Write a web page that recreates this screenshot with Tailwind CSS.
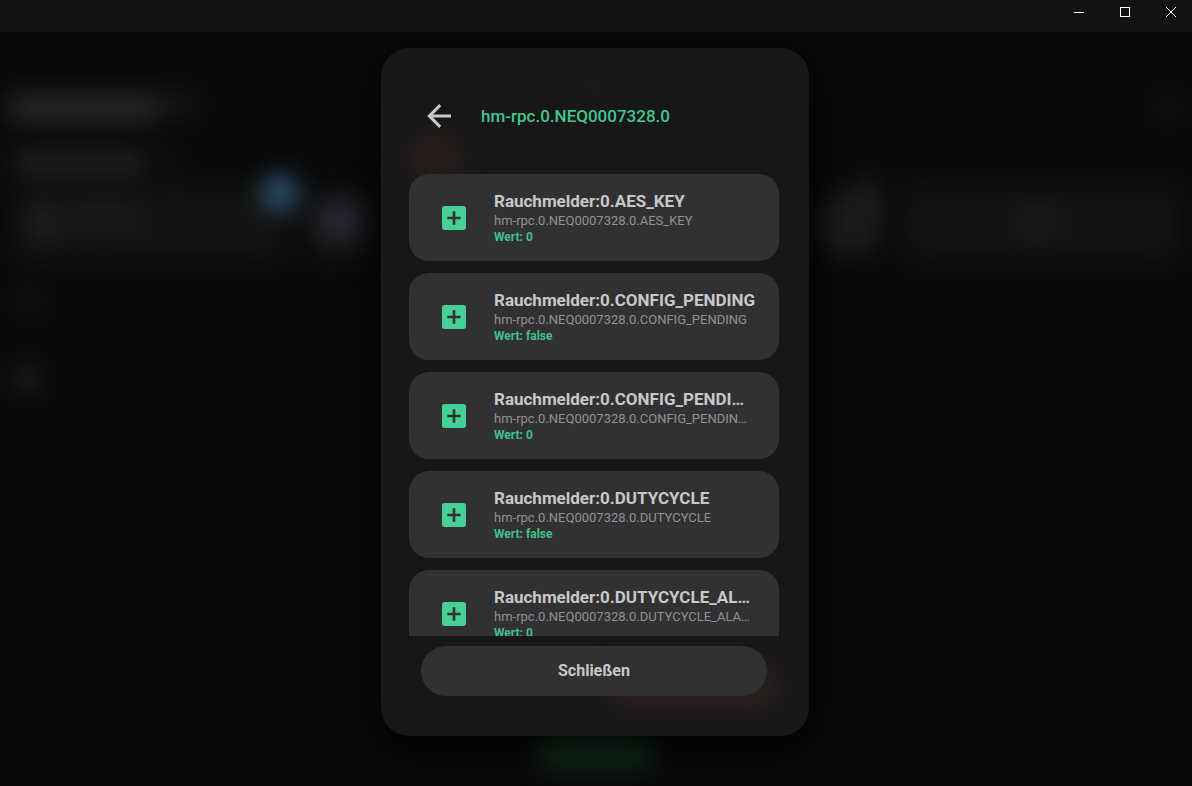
<!DOCTYPE html>
<html lang="de">
<head>
    <meta charset="UTF-8" />
    <meta name="viewport" content="width=device-width, initial-scale=1.0"/>
    <title>hm-rpc.0.NEQ0007328.0</title>
    <script src="https://cdn.jsdelivr.net/npm/@tailwindcss/browser@4"></script>
</head>
<body class="relative isolate flex h-screen flex-col overflow-hidden bg-[#090909] font-[Roboto,sans-serif] text-[#c8c8c8]">

<!-- Blurred dashboard behind the dialog -->
<svg class="absolute inset-0 -z-10 h-full w-full" aria-hidden="true">
    <defs>
        <filter id="blur" x="-100%" y="-100%" width="300%" height="300%" color-interpolation-filters="sRGB">
            <feGaussianBlur stdDeviation="12" />
        </filter>
    </defs>
    <g filter="url(#blur)">
        <rect x="8" y="94" width="150" height="28" rx="8" fill="#272727" />
        <rect x="158" y="92" width="38" height="24" rx="8" fill="#171717" />
        <rect x="14" y="150" width="130" height="24" rx="8" fill="#212121" />
        <rect x="144" y="150" width="34" height="20" rx="8" fill="#111111" />
        <rect x="14" y="184" width="274" height="78" rx="20" fill="#131313" />
        <circle cx="43" cy="222" r="15" fill="#222222" />
        <rect x="74" y="208" width="58" height="18" fill="#1e1e1f" />
        <circle cx="340" cy="224" r="38" fill="#161616" />
        <circle cx="29" cy="300" r="13" fill="#131313" />
        <circle cx="27" cy="379" r="14" fill="#202020" />
    </g>
    <g filter="url(#blur)">
        <circle cx="280" cy="193" r="19" fill="#2c516b" />
        <circle cx="340" cy="221" r="17" fill="#2f2f42" />
    </g>
    <svg x="100%" overflow="visible">
        <g filter="url(#blur)">
            <rect x="-290" y="184" width="280" height="78" rx="20" fill="#131313" />
            <circle cx="-342" cy="224" r="34" fill="#1b1b1d" />
            <circle cx="-324" cy="194" r="14" fill="#202020" />
            <circle cx="-153" cy="222" r="14" fill="#1e1e1e" />
            <circle cx="-24" cy="107" r="12" fill="#131313" />
        </g>
    </svg>
</svg>

<header class="-mr-0.5 flex h-8 shrink-0 justify-end bg-[#131313] text-white">
    <button type="button" aria-label="Minimieren" class="flex h-6 w-[46px] items-center justify-center">
        <svg class="h-[10px] w-[10px]" viewBox="0 0 10 10" shape-rendering="crispEdges"><path d="M0 5h10v1H0z" fill="currentColor" /></svg>
    </button>
    <button type="button" aria-label="Maximieren" class="flex h-6 w-[46px] items-center justify-center">
        <svg class="h-[10px] w-[10px]" viewBox="0 0 10 10" shape-rendering="crispEdges"><path d="M.5.5h9v9h-9z" fill="none" stroke="currentColor" /></svg>
    </button>
    <button type="button" aria-label="Schließen" class="flex h-6 w-[46px] items-center justify-center">
        <svg class="h-[10px] w-[10px]" viewBox="0 0 10 10"><path d="M0 0l10 10M10 0L0 10" fill="none" stroke="currentColor" /></svg>
    </button>
</header>

<main class="flex min-h-0 flex-1 justify-center pt-4 pr-0.5 pb-[50px]">
    <div role="dialog" aria-labelledby="dialog-title" class="relative isolate flex w-full max-w-[428px] flex-col overflow-hidden rounded-[28px] bg-[#171719] pr-[30px] pl-7 shadow-[0_10px_40px_#000]">
        <svg class="absolute inset-0 -z-10 h-full w-full" aria-hidden="true">
            <g filter="url(#blur)">
                <circle cx="54" cy="110" r="18" fill="none" stroke="#33231c" stroke-width="12" />
                <rect x="194" y="32" width="38" height="12" fill="#202022" />
            </g>
            <svg y="100%" overflow="visible">
                <rect x="228" y="-72" width="172" height="46" rx="20" fill="#2b1f1d" filter="url(#blur)" />
            </svg>
        </svg>

        <div class="mt-[50px] mb-10 flex items-center gap-6 pl-3">
            <button type="button" aria-label="Zurück">
                <svg class="h-9 w-9" viewBox="0 0 24 24" fill="currentColor"><path d="M20 11v2H8l5.5 5.5-1.42 1.42L4.16 12l7.92-7.92L13.5 5.5 8 11h12z" /></svg>
            </button>
            <h1 id="dialog-title" class="text-[17px] leading-6 font-medium text-[#40c88c]">hm-rpc.0.NEQ0007328.0</h1>
        </div>

        <ul class="flex min-h-0 flex-1 flex-col gap-3 overflow-y-auto [scrollbar-width:none]">
            <li class="flex shrink-0 items-center gap-6 rounded-[20px] bg-[#313133] py-4 pr-[23px] pl-[29px]">
                <button type="button" aria-label="Hinzufügen" class="shrink-0 text-[#45d095]">
                    <svg class="h-8 w-8" viewBox="0 0 24 24" fill="currentColor"><path d="M17 13h-4v4h-2v-4H7v-2h4V7h2v4h4m2-8H5a2 2 0 0 0-2 2v14a2 2 0 0 0 2 2h14a2 2 0 0 0 2-2V5a2 2 0 0 0-2-2z" /></svg>
                </button>
                <div class="min-w-0">
                    <h2 class="truncate text-[17px] leading-[22px] font-bold">Rauchmelder:0.AES_KEY</h2>
                    <p class="truncate pr-1 text-[13px] leading-[18px] text-[#929293]">hm-rpc.0.NEQ0007328.0.AES_KEY</p>
                    <p class="truncate text-xs leading-[15px] font-bold text-[#40c08a]">Wert: 0</p>
                </div>
            </li>
            <li class="flex shrink-0 items-center gap-6 rounded-[20px] bg-[#313133] py-4 pr-[23px] pl-[29px]">
                <button type="button" aria-label="Hinzufügen" class="shrink-0 text-[#45d095]">
                    <svg class="h-8 w-8" viewBox="0 0 24 24" fill="currentColor"><path d="M17 13h-4v4h-2v-4H7v-2h4V7h2v4h4m2-8H5a2 2 0 0 0-2 2v14a2 2 0 0 0 2 2h14a2 2 0 0 0 2-2V5a2 2 0 0 0-2-2z" /></svg>
                </button>
                <div class="min-w-0">
                    <h2 class="truncate text-[17px] leading-[22px] font-bold">Rauchmelder:0.CONFIG_PENDING</h2>
                    <p class="truncate pr-1 text-[13px] leading-[18px] text-[#929293]">hm-rpc.0.NEQ0007328.0.CONFIG_PENDING</p>
                    <p class="truncate text-xs leading-[15px] font-bold text-[#40c08a]">Wert: false</p>
                </div>
            </li>
            <li class="flex shrink-0 items-center gap-6 rounded-[20px] bg-[#313133] py-4 pr-[23px] pl-[29px]">
                <button type="button" aria-label="Hinzufügen" class="shrink-0 text-[#45d095]">
                    <svg class="h-8 w-8" viewBox="0 0 24 24" fill="currentColor"><path d="M17 13h-4v4h-2v-4H7v-2h4V7h2v4h4m2-8H5a2 2 0 0 0-2 2v14a2 2 0 0 0 2 2h14a2 2 0 0 0 2-2V5a2 2 0 0 0-2-2z" /></svg>
                </button>
                <div class="min-w-0">
                    <h2 class="truncate text-[17px] leading-[22px] font-bold">Rauchmelder:0.CONFIG_PENDING_ALARM</h2>
                    <p class="truncate pr-1 text-[13px] leading-[18px] text-[#929293]">hm-rpc.0.NEQ0007328.0.CONFIG_PENDING_ALARM</p>
                    <p class="truncate text-xs leading-[15px] font-bold text-[#40c08a]">Wert: 0</p>
                </div>
            </li>
            <li class="flex shrink-0 items-center gap-6 rounded-[20px] bg-[#313133] py-4 pr-[23px] pl-[29px]">
                <button type="button" aria-label="Hinzufügen" class="shrink-0 text-[#45d095]">
                    <svg class="h-8 w-8" viewBox="0 0 24 24" fill="currentColor"><path d="M17 13h-4v4h-2v-4H7v-2h4V7h2v4h4m2-8H5a2 2 0 0 0-2 2v14a2 2 0 0 0 2 2h14a2 2 0 0 0 2-2V5a2 2 0 0 0-2-2z" /></svg>
                </button>
                <div class="min-w-0">
                    <h2 class="truncate text-[17px] leading-[22px] font-bold">Rauchmelder:0.DUTYCYCLE</h2>
                    <p class="truncate pr-1 text-[13px] leading-[18px] text-[#929293]">hm-rpc.0.NEQ0007328.0.DUTYCYCLE</p>
                    <p class="truncate text-xs leading-[15px] font-bold text-[#40c08a]">Wert: false</p>
                </div>
            </li>
            <li class="flex shrink-0 items-center gap-6 rounded-[20px] bg-[#313133] py-4 pr-[23px] pl-[29px]">
                <button type="button" aria-label="Hinzufügen" class="shrink-0 text-[#45d095]">
                    <svg class="h-8 w-8" viewBox="0 0 24 24" fill="currentColor"><path d="M17 13h-4v4h-2v-4H7v-2h4V7h2v4h4m2-8H5a2 2 0 0 0-2 2v14a2 2 0 0 0 2 2h14a2 2 0 0 0 2-2V5a2 2 0 0 0-2-2z" /></svg>
                </button>
                <div class="min-w-0">
                    <h2 class="truncate text-[17px] leading-[22px] font-bold">Rauchmelder:0.DUTYCYCLE_ALARM</h2>
                    <p class="truncate pr-1 text-[13px] leading-[18px] text-[#929293]">hm-rpc.0.NEQ0007328.0.DUTYCYCLE_ALARM</p>
                    <p class="truncate text-xs leading-[15px] font-bold text-[#40c08a]">Wert: 0</p>
                </div>
            </li>
        </ul>

        <button type="button" class="mx-3 mt-[10px] mb-10 h-[50px] shrink-0 rounded-full bg-[#313133] text-base font-bold">Schließen</button>
    </div>

    <!-- Green glow peeking out below the dialog -->
    <svg class="absolute bottom-0 left-0 -z-10 h-[50px] w-full overflow-visible" aria-hidden="true">
        <svg x="50%" overflow="visible">
            <rect x="-60" y="-10" width="118" height="42" rx="16" fill="#0f2f1d" filter="url(#blur)" />
        </svg>
    </svg>
</main>
</body>
</html>
